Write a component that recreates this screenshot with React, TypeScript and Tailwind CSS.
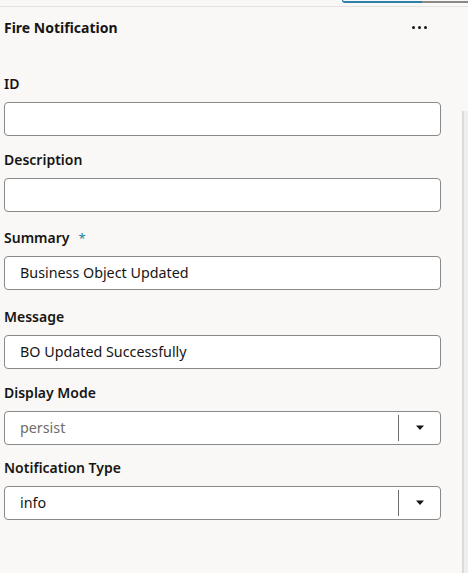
import React from "react";

const FONT = { fontFamily: '"Noto Sans", "Open Sans", sans-serif' };

function Label({ text, required }: { text: string; required?: boolean }) {
  return (
    <div className="flex h-[22px] items-center text-[14px] font-semibold leading-none text-[#161513]">
      {text}
      {required && <span className="ml-[9px] text-[13px] font-normal text-[#227e9e]">*</span>}
    </div>
  );
}

function TextField({ value }: { value?: string }) {
  return (
    <div className="mt-[7px] flex h-[34px] items-center rounded-[4px] border border-[#8b8987] bg-white pl-[15px] text-[14.3px] text-[#161513]">
      {value}
    </div>
  );
}

function SelectField({ value, muted }: { value: string; muted?: boolean }) {
  return (
    <div className="mt-[7px] flex h-[34px] items-center rounded-[4px] border border-[#8b8987] bg-white text-[14.3px]">
      <span className={`flex-1 pl-[15px] ${muted ? "text-[#6f6c69]" : "text-[#161513]"}`}>{value}</span>
      <div className="h-[26px] w-px bg-[#6f6c69]" />
      <div className="flex w-[41px] items-center justify-center">
        <svg width="10" height="6" viewBox="0 0 10 6">
          <path d="M1 0.5h8L5 5z" fill="#161513" />
        </svg>
      </div>
    </div>
  );
}

export default function App() {
  return (
    <div className="relative h-[573px] w-[468px] overflow-hidden bg-[#f9f8f6]" style={FONT}>
      {/* top tab strip */}
      <div className="flex h-[3px]">
        <div className="flex-1" />
        <div className="w-[80px] rounded-bl-[3px] border-b-2 border-l border-[#2b82a6]" />
        <div className="w-[46px] border-b-2 border-[#8b8987]" />
      </div>
      <div className="mt-[3px] h-px bg-[#e4e2df]" />

      {/* scrollbar track */}
      <div className="absolute right-0 top-[111px] bottom-0 w-[6px] border-l-2 border-[#dcdad7] bg-[#efeeec]" />

      <div className="pl-[4px] pr-[27px]">
        <div className="flex h-[40px] items-center justify-between pt-[1px]">
          <span className="text-[14px] font-bold text-[#161513]">Fire Notification</span>
          <div className="mr-[14px] flex gap-[3px]">
            <span className="h-[3px] w-[3px] rounded-full bg-[#161513]" />
            <span className="h-[3px] w-[3px] rounded-full bg-[#161513]" />
            <span className="h-[3px] w-[3px] rounded-full bg-[#161513]" />
          </div>
        </div>

        <div className="mt-[26px] flex flex-col gap-[13px]">
          <div>
            <Label text="ID" />
            <TextField />
          </div>
          <div>
            <Label text="Description" />
            <TextField />
          </div>
          <div className="mt-[2px]">
            <Label text="Summary" required />
            <TextField value="Business Object Updated" />
          </div>
          <div className="mt-[3px]">
            <Label text="Message" />
            <TextField value="BO Updated Successfully" />
          </div>
          <div>
            <Label text="Display Mode" />
            <SelectField value="persist" muted />
          </div>
          <div className="-mt-[1px]">
            <Label text="Notification Type" />
            <SelectField value="info" />
          </div>
        </div>
      </div>
    </div>
  );
}
